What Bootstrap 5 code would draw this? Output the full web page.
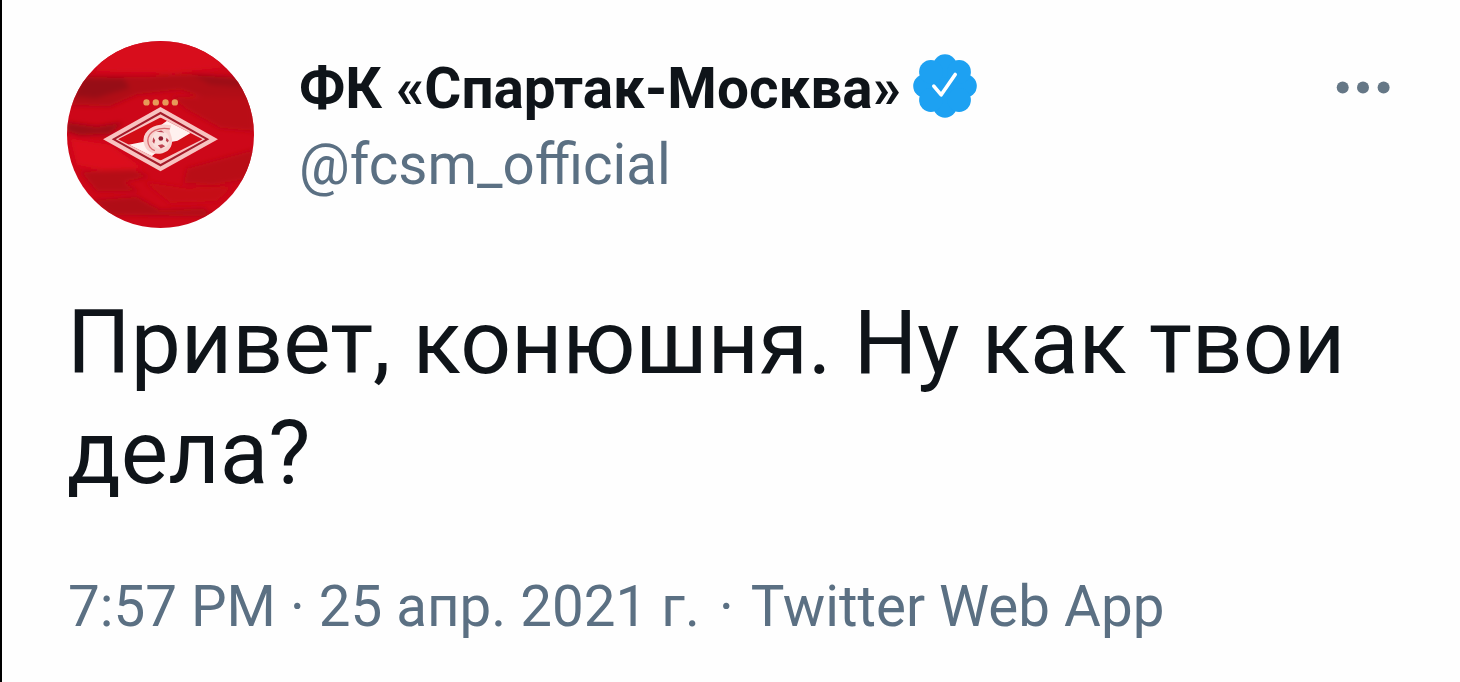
<!DOCTYPE html>
<html lang="ru">
<head>
  <meta charset="UTF-8">
  <meta name="viewport" content="width=device-width,initial-scale=1">
  <title>ФК «Спартак-Москва»</title>
  <link href="https://cdn.jsdelivr.net/npm/bootstrap@5.3.3/dist/css/bootstrap.min.css" rel="stylesheet">
  <style>
    body{font-family:Roboto,"Liberation Sans",sans-serif;color:#0f1419;background:#fefefe;overflow:hidden}
    .tweet{height:682px;border-left:2px solid #000;padding:41px 70px 0 65px}
    .avatar{width:187px;height:187px}
    .author{margin-left:45px;padding-top:9px;font-size:56.7px;line-height:77px}
    .author-name{font-weight:700}
    .author-handle{font-size:56.5px}
    .verified{width:64px;height:64px;margin:0 0 5px 12px}
    .muted-text{color:#5b7083}
    .more-dots{width:54px;height:14px;margin-top:39px}
    .tweet-text{margin-top:60px;font-size:89.25px;line-height:109.5px}
    .tweet-meta{margin:62px 0 0 1px;font-size:56.5px;line-height:76px}
    .meta-dot{margin:0 3px 0 5px}
  </style>
</head>
<body>
  <article class="tweet">
    <header class="d-flex align-items-start">
      <svg class="avatar flex-shrink-0" viewBox="21 19 560 560" aria-hidden="true">
        <defs>
          <clipPath id="round"><circle cx="301" cy="299" r="280"/></clipPath>
          <clipPath id="field"><path d="M301 248 427 313 301 377 174 313Z"/></clipPath>
          <filter id="soft" x="-20%" y="-50%" width="140%" height="200%"><feGaussianBlur stdDeviation="8"/></filter>
          <filter id="edge"><feGaussianBlur stdDeviation="2"/></filter>
        </defs>
        <g clip-path="url(#round)">
          <rect x="21" y="19" width="560" height="560" fill="#cd0719"/>
          <!-- brushed background -->
          <g filter="url(#soft)">
            <path d="M100 20H500L480 100 330 115 110 110Z" fill="#d8091b"/>
            <path d="M60 122 250 126 400 118 540 130 580 200 420 185 360 165 230 180 150 215 30 212Z" fill="#b10719"/>
            <path d="M70 132 190 132 210 160 110 190 40 185Z" fill="#970718"/>
            <path d="M400 120 540 128 560 160 450 150Z" fill="#9d0718"/>
            <path d="M330 185 580 190V290L480 280 380 225Z" fill="#b90719"/>
            <path d="M20 262 110 275 190 262 150 298 60 302 20 290Z" fill="#9d0718"/>
            <path d="M30 310 150 330 250 400 130 405 50 390Z" fill="#dc091c"/>
            <path d="M60 410 220 405 270 425 190 442 240 470 110 470Z" fill="#b50719"/>
            <path d="M380 400 580 345V430L460 450 370 445Z" fill="#b90719"/>
            <path d="M100 495 230 485 300 525 430 520 460 545 150 540Z" fill="#b00719"/>
            <path d="M250 440 380 460 520 455 470 500 330 505Z" fill="#c60719"/>
          </g>
          <!-- club crest -->
          <g filter="url(#edge)">
            <g fill="#e79a58">
              <circle cx="259" cy="203" r="9.5"/><circle cx="287" cy="203" r="9.5"/>
              <circle cx="316" cy="203" r="9.5"/><circle cx="344" cy="203" r="9.5"/>
            </g>
            <path d="M301 217 473 313 301 409 129 313Z" fill="#f8c3c1"/>
            <path d="M301 231 447 313 301 395 155 313Z" fill="#a51a29"/>
            <path d="M301 238 435 313 301 387 167 313Z" fill="#f8c3c1"/>
            <g clip-path="url(#field)">
              <path d="M160 230H440V400H160Z" fill="#d20719"/>
              <path d="M325 255 395 292 352 318 328 322 270 368 205 330 255 320 275 290Z" fill="#fff1ef"/>
            </g>
            <path d="M333 272C296 262 252 279 250 315 250 346 275 362 307 355 332 349 340 326 334 306L328 288Z" fill="#f8d0cd"/>
            <path d="M329 282C296 276 264 289 263 317 263 333 273 344 284 347" fill="none" stroke="#d86b70" stroke-width="4"/>
            <circle cx="301" cy="315" r="27" fill="#fae0dc"/>
            <circle cx="302" cy="311" r="7" fill="#8e1a2d"/>
            <path d="M279 307 285 316 282 327 277 321Z M293 331 306 328 315 334 302 341Z M319 309 326 316 323 323 317 318Z M288 291 303 287 313 293Z" fill="#bd4350"/>
          </g>
        </g>
      </svg>

      <div class="author flex-grow-1">
        <div class="d-flex align-items-center">
          <span class="author-name text-nowrap">ФК «Спартак-Москва»</span>
          <svg class="verified flex-shrink-0" viewBox="-32 -32 64 64" role="img" aria-label="Verified">
            <g fill="#1da1f2">
              <circle r="25"/>
              <circle cy="-20" r="11.8"/><circle cy="20" r="11.8"/>
              <circle cx="-20" r="11.8"/><circle cx="20" r="11.8"/>
              <circle cx="-14.1" cy="-14.1" r="11.8"/><circle cx="14.1" cy="-14.1" r="11.8"/>
              <circle cx="-14.1" cy="14.1" r="11.8"/><circle cx="14.1" cy="14.1" r="11.8"/>
            </g>
            <path d="M-11.2.2-3.8 8.8 10.2-11.5" fill="none" stroke="#fff" stroke-width="3.6" stroke-linecap="round" stroke-linejoin="round"/>
          </svg>
        </div>
        <div class="author-handle muted-text">@fcsm_official</div>
      </div>

      <svg class="more-dots flex-shrink-0" viewBox="0 0 54 14" fill="#657786" role="img" aria-label="More">
        <circle cx="6.7" cy="7.5" r="6"/><circle cx="27" cy="7.5" r="6"/><circle cx="47.6" cy="7.5" r="6"/>
      </svg>
    </header>

    <p class="tweet-text mb-0">Привет, конюшня. Ну как твои дела?</p>

    <div class="tweet-meta muted-text text-nowrap">7:57 PM · 25 апр. 2021 г. <span class="meta-dot">·</span> Twitter Web App</div>
  </article>

<script src="https://cdn.jsdelivr.net/npm/bootstrap@5.3.3/dist/js/bootstrap.bundle.min.js"></script>
</body>
</html>
